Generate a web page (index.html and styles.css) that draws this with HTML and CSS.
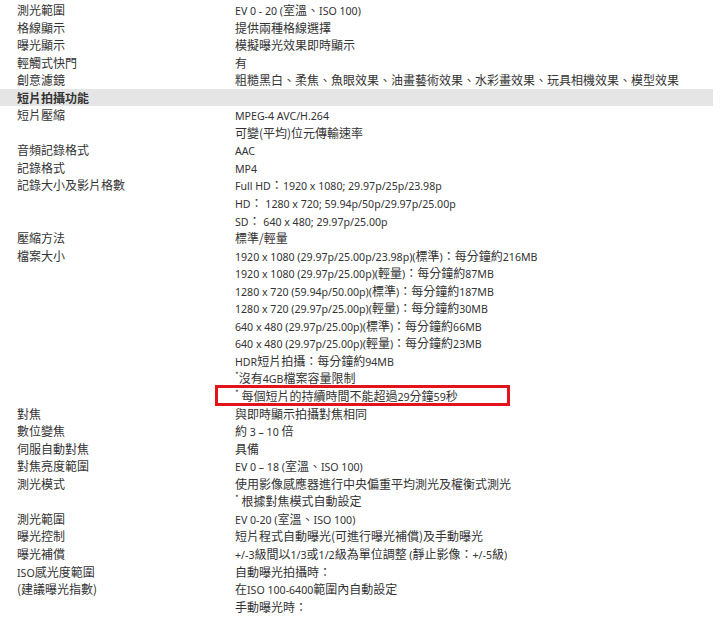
FILE: index.html
```html
<!DOCTYPE html>
<html lang="zh-Hant">
<head>
    <meta charset="UTF-8">
    <meta name="viewport" content="width=device-width, initial-scale=1.0">
    <title>規格</title>
    <link rel="stylesheet" href="styles.css">
</head>
<body>
    <table class="spec">
        <tr><td class="label">測光範圍</td><td><span class="en">EV 0 - 20 (</span>室溫、<span class="en">ISO 100)</span></td></tr>
        <tr><td class="label">格線顯示</td><td>提供兩種格線選擇</td></tr>
        <tr><td class="label">曝光顯示</td><td>模擬曝光效果即時顯示</td></tr>
        <tr><td class="label">輕觸式快門</td><td>有</td></tr>
        <tr><td class="label">創意濾鏡</td><td>粗糙黑白、柔焦、魚眼效果、油畫藝術效果、水彩畫效果、玩具相機效果、模型效果</td></tr>
        <tr class="section"><td colspan="2">短片拍攝功能</td></tr>
        <tr><td class="label">短片壓縮</td><td><span class="en">MPEG-4 AVC/H.264</span><br>可變(平均)位元傳輸速率</td></tr>
        <tr><td class="label">音頻記錄格式</td><td><span class="en">AAC</span></td></tr>
        <tr><td class="label">記錄格式</td><td><span class="en">MP4</span></td></tr>
        <tr><td class="label">記錄大小及影片格數</td><td><span class="en">Full HD</span>：<span class="en">1920 x 1080; 29.97p/25p/23.98p</span><br><span class="en">HD</span>：<span class="en">&nbsp;1280 x 720; 59.94p/50p/29.97p/25.00p</span><br><span class="en">SD</span>：<span class="en">&nbsp;640 x 480; 29.97p/25.00p</span></td></tr>
        <tr><td class="label">壓縮方法</td><td>標準/輕量</td></tr>
        <tr><td class="label">檔案大小</td><td>
            <span class="en">1920 x 1080 (29.97p/25.00p/23.98p)(</span>標準<span class="en">)</span>：每分鐘約<span class="en">216MB</span><br>
            <span class="en">1920 x 1080 (29.97p/25.00p)(</span>輕量<span class="en">)</span>：每分鐘約<span class="en">87MB</span><br>
            <span class="en">1280 x 720 (59.94p/50.00p)(</span>標準<span class="en">)</span>：每分鐘約<span class="en">187MB</span><br>
            <span class="en">1280 x 720 (29.97p/25.00p)(</span>輕量<span class="en">)</span>：每分鐘約<span class="en">30MB</span><br>
            <span class="en">640 x 480 (29.97p/25.00p)(</span>標準<span class="en">)</span>：每分鐘約<span class="en">66MB</span><br>
            <span class="en">640 x 480 (29.97p/25.00p)(</span>輕量<span class="en">)</span>：每分鐘約<span class="en">23MB</span><br>
            <span class="en">HDR</span>短片拍攝：每分鐘約<span class="en">94MB</span><br>
            <sup>*</sup>沒有<span class="en">4GB</span>檔案容量限制<br>
            <span class="mark"><sup>*</sup> 每個短片的持續時間不能超過<span class="en">29</span>分鐘<span class="en">59</span>秒</span>
        </td></tr>
        <tr><td class="label">對焦</td><td>與即時顯示拍攝對焦相同</td></tr>
        <tr><td class="label">數位變焦</td><td>約 <span class="en">3 – 10</span> 倍</td></tr>
        <tr><td class="label">伺服自動對焦</td><td>具備</td></tr>
        <tr><td class="label">對焦亮度範圍</td><td><span class="en">EV 0 – 18 (</span>室溫、<span class="en">ISO 100)</span></td></tr>
        <tr><td class="label">測光模式</td><td>使用影像感應器進行中央偏重平均測光及權衡式測光<br><sup>*</sup> 根據對焦模式自動設定</td></tr>
        <tr><td class="label">測光範圍</td><td><span class="en">EV 0-20 (</span>室溫、<span class="en">ISO 100)</span></td></tr>
        <tr><td class="label">曝光控制</td><td>短片程式自動曝光(可進行曝光補償)及手動曝光</td></tr>
        <tr><td class="label">曝光補償</td><td><span class="en">+/-3</span>級間以<span class="en">1/3</span>或<span class="en">1/2</span>級為單位調整 <span class="en">(</span>靜止影像：<span class="en">+/-5</span>級<span class="en">)</span></td></tr>
        <tr><td class="label"><span class="en">ISO</span>感光度範圍<br>(建議曝光指數)</td><td>自動曝光拍攝時：<br>在<span class="en">ISO 100-6400</span>範圍內自動設定<br>手動曝光時：</td></tr>
    </table>
</body>
</html>
```

FILE: styles.css
```css
body{margin: 0; padding-top: 1px; background: #fff; color: #333; font-family: "Noto Sans CJK TC", sans-serif; font-size: 12px;}
.spec{width: 713px; border-collapse: collapse;}
.spec td{padding: 0; line-height: 17.55px; vertical-align: top; white-space: nowrap;}
.spec td.label{width: 218px; padding-left: 17px;}
.section td{background-color: #e5e5e5; font-weight: bold; padding-left: 17px;}
.en{font-family: "Noto Sans", sans-serif; font-size: 10.6px; line-height: 1;}
sup{font-size: 8px; line-height: 0; vertical-align: 5px;}
.mark{position: relative; display: inline-block;}
.mark::after{content: ""; position: absolute; left: -20px; top: -2px; width: 295px; height: 21px; border: 3px solid #e3131b; box-sizing: border-box;}
```
